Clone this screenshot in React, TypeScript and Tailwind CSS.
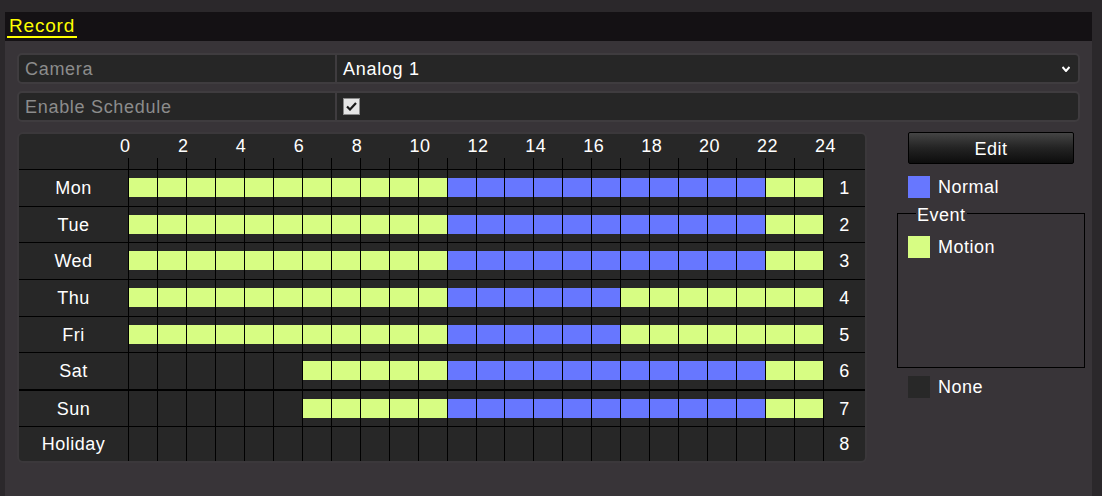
import React from 'react';

type Slot = 'n' | 'g' | 'b';

const G = '#d7fd83';
const B = '#6777ff';

const makeDay = (spans: [number, number, Slot][]): Slot[] => {
  const out: Slot[] = Array(24).fill('n');
  spans.forEach(([from, to, kind]) => {
    for (let h = from; h < to; h++) out[h] = kind;
  });
  return out;
};

const weekA = makeDay([[0, 11, 'g'], [11, 22, 'b'], [22, 24, 'g']]);
const weekB = makeDay([[0, 11, 'g'], [11, 17, 'b'], [17, 24, 'g']]);
const weekend = makeDay([[6, 11, 'g'], [11, 22, 'b'], [22, 24, 'g']]);
const empty = makeDay([]);

const days = [
  { name: 'Mon', slots: weekA, h: 'h-[37px]', top: 'border-t' },
  { name: 'Tue', slots: weekA, h: 'h-[36px]', top: 'border-t' },
  { name: 'Wed', slots: weekA, h: 'h-[37px]', top: 'border-t' },
  { name: 'Thu', slots: weekB, h: 'h-[37px]', top: 'border-t' },
  { name: 'Fri', slots: weekB, h: 'h-[36px]', top: 'border-t' },
  { name: 'Sat', slots: weekend, h: 'h-[37px]', top: 'border-t' },
  { name: 'Sun', slots: weekend, h: 'h-[37px]', top: 'border-t-2' },
  { name: 'Holiday', slots: empty, h: 'h-[35px]', top: 'border-t' },
];

const hourLabels = [0, 2, 4, 6, 8, 10, 12, 14, 16, 18, 20, 22, 24];

const cols = 'grid grid-cols-[109px_repeat(24,minmax(0,1fr))_42px]';

const FieldRow: React.FC<{ label: string; children: React.ReactNode }> = ({ label, children }) => (
  <div className="flex h-[31px] rounded-[5px] border-2 border-[#3f3c3f] bg-[#262626]">
    <div className="w-[318px] flex items-center pl-[6px] text-[#8c8c8c] border-r-2 border-[#3f3c3f]">
      {label}
    </div>
    <div className="flex-1 flex items-center pl-[6px] pr-[8px] text-white">{children}</div>
  </div>
);

const Legend: React.FC<{ color: string; label: string }> = ({ color, label }) => (
  <div className="flex items-center h-[22px] ml-[11px] gap-[8px] text-white">
    <div className="w-[22px] h-[22px]" style={{ backgroundColor: color }} />
    <span>{label}</span>
  </div>
);

export default function App() {
  return (
    <div className="w-[1102px] h-[496px] bg-[#2b282b] pt-[12px] pl-[5px] pr-[10px] font-['Liberation_Sans',Arial,sans-serif] text-[18px] leading-none tracking-[0.7px] overflow-hidden">
      <div className="h-full bg-[#383438] flex flex-col">
        <div className="h-[29px] bg-[#141114] flex items-start pl-[2px] pt-[4px]">
          <span className="text-[#ffff00] text-[19px] px-[2px] pb-[1px] border-b-2 border-[#ffff00] tracking-[0.8px]">Record</span>
        </div>

        <div className="px-[12px] pt-[12px] flex flex-col gap-[7px]">
          <FieldRow label="Camera">
            <span className="flex-1">Analog 1</span>
            <svg width="8" height="6" viewBox="0 0 8 6">
              <path d="M0.5 1 L4 5 L7.5 1" fill="none" stroke="#fff" strokeWidth="2" />
            </svg>
          </FieldRow>
          <FieldRow label="Enable Schedule">
            <div className="w-[17px] h-[17px] bg-[#e6e6e6] border border-[#8a8a8a] flex items-center justify-center">
              <svg width="11" height="9" viewBox="0 0 11 9">
                <path d="M1 4.5 L4 7.5 L10 1" fill="none" stroke="#1a1a1a" strokeWidth="2.2" />
              </svg>
            </div>
          </FieldRow>
        </div>

        <div className="flex pl-[12px] pt-[10px]">
          <div className="w-[850px] shrink-0 rounded-[6px] border-2 border-[#3b383b] bg-[#272727] text-white tracking-[0.5px]">
            <div className="h-[35px] flex flex-col">
              <div className="h-[24px] flex items-center pl-[101px]">
                {hourLabels.map(h => (
                  <div key={h} className="w-[57.92px] shrink-0 text-left">{h}</div>
                ))}
              </div>
              <div className={`${cols} h-[11px]`}>
                <div />
                {Array.from({ length: 24 }).map((_, i) => (
                  <div key={i} className="border-l border-black" />
                ))}
                <div className="border-l border-black" />
              </div>
            </div>

            {days.map((d, idx) => (
              <div key={d.name} className={`${cols} ${d.h} ${d.top} border-black`}>
                <div className="flex items-center justify-center">{d.name}</div>
                {d.slots.map((s, i) => (
                  <div key={i} className="border-l border-black pt-[8px]">
                    {s !== 'n' && (
                      <div className="h-[19px] w-full" style={{ backgroundColor: s === 'g' ? G : B }} />
                    )}
                  </div>
                ))}
                <div className="border-l border-black flex items-center justify-center">{idx + 1}</div>
              </div>
            ))}
          </div>

          <div className="ml-[30px] w-[188px] shrink-0 flex flex-col tracking-[0.5px]">
            <button className="ml-[11px] w-[166px] h-[32px] rounded-[2px] border border-black bg-gradient-to-b from-[#454545] via-[#232323] to-[#0d0d0d] text-white pt-[2px]">
              Edit
            </button>
            <div className="mt-[12px]">
              <Legend color={B} label="Normal" />
            </div>
            <fieldset className="mt-[4px] h-[166px] border border-black">
              <legend className="ml-[18px] px-[1px] pt-[4px] text-white leading-[18px]">Event</legend>
              <div className="mt-[12px] -ml-[1px]">
                <Legend color={G} label="Motion" />
              </div>
            </fieldset>
            <div className="mt-[8px]">
              <Legend color="#282828" label="None" />
            </div>
          </div>
        </div>
      </div>
    </div>
  );
}
